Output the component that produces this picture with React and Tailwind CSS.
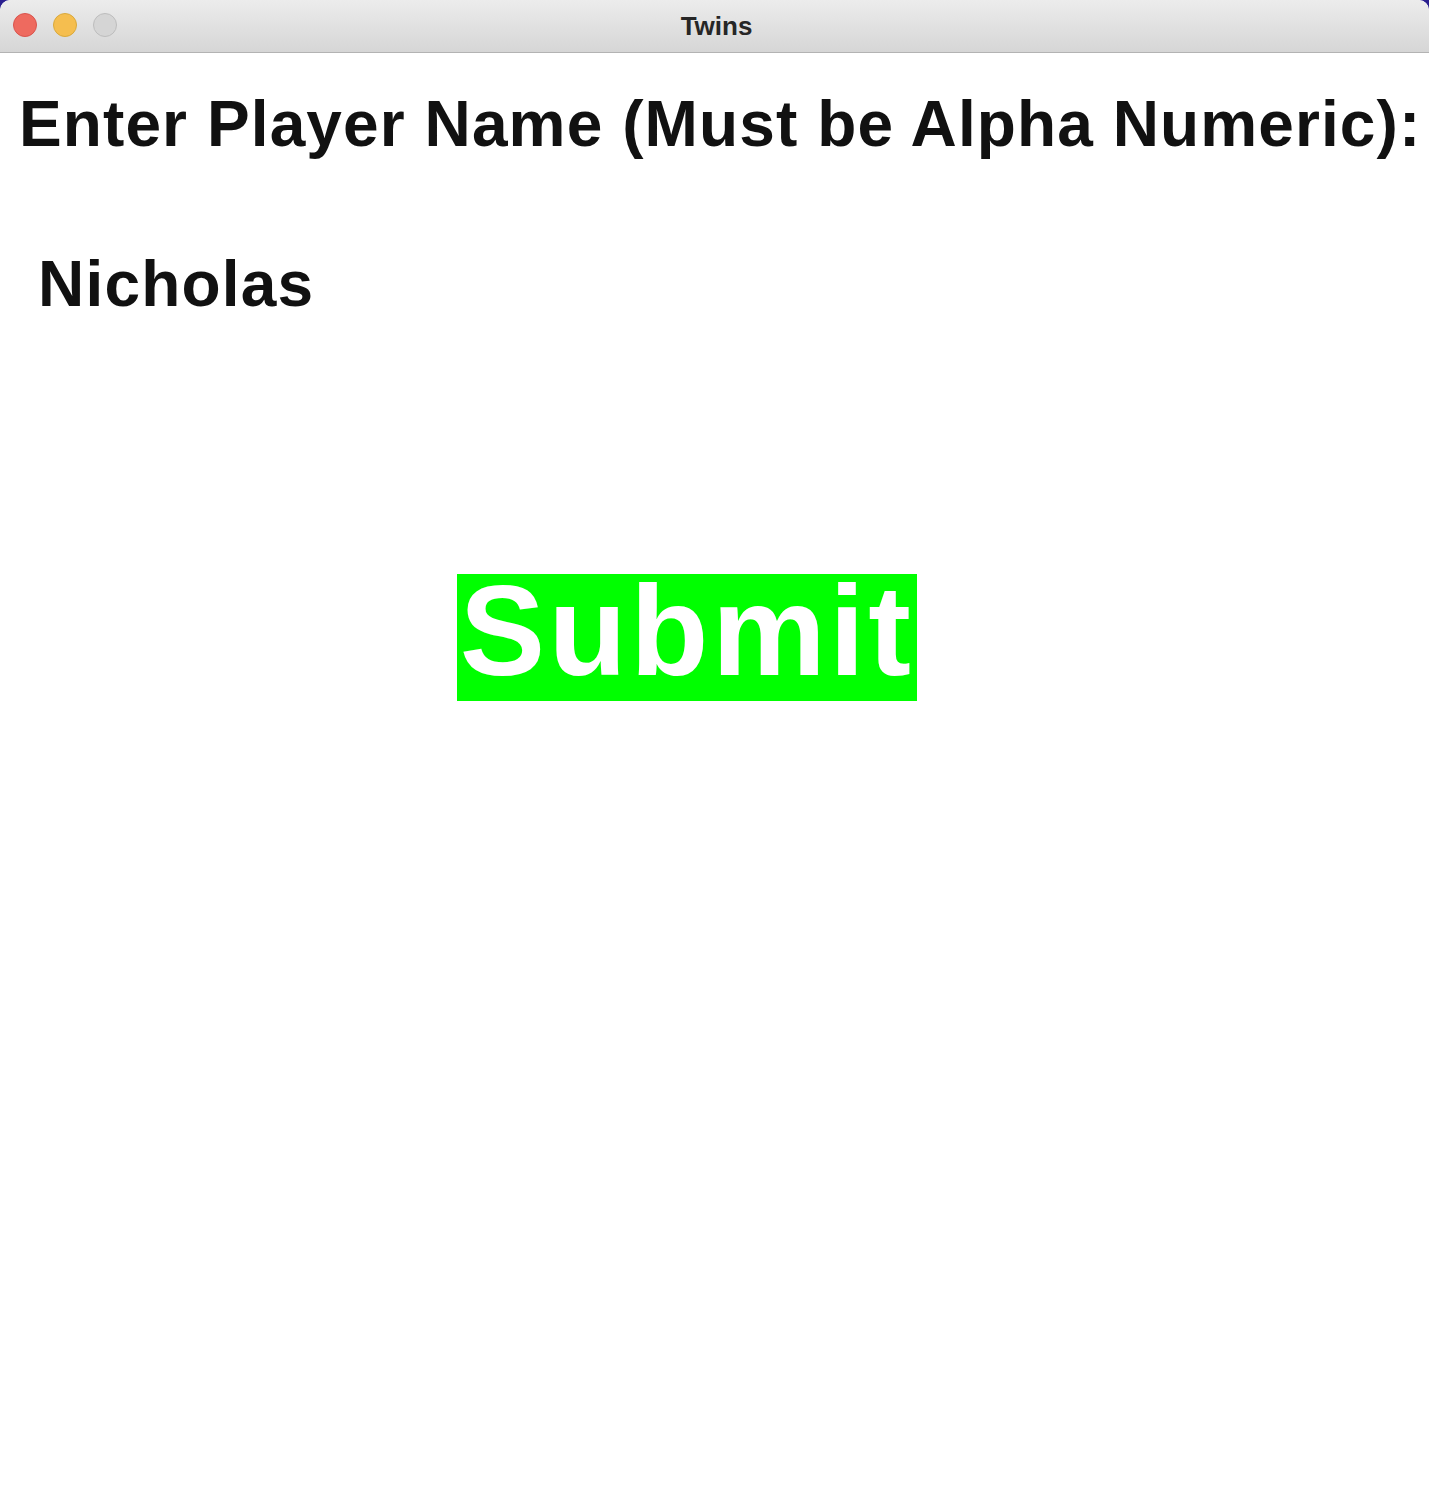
import { useState } from 'react';

// Barra de título estilo macOS
const TitleBar = ({ title }) => (
  <div className="relative flex h-[53px] items-center justify-center border-b border-[#b3b3b3] bg-gradient-to-b from-[#ececec] to-[#d6d6d6] rounded-t-[10px]">
    <div className="absolute left-[13px] top-[13px] flex gap-4">
      <span className="h-6 w-6 rounded-full border border-[#d9544d] bg-[#ee6a5f]" />
      <span className="h-6 w-6 rounded-full border border-[#d9a93c] bg-[#f5be4f]" />
      <span className="h-6 w-6 rounded-full border border-[#bdbdbd] bg-[#d5d5d5]" />
    </div>
    <span className="ml-[4px] text-[26px] font-bold leading-none text-[#262626]">{title}</span>
  </div>
);

const App = () => {
  const [name, setName] = useState('Nicholas');

  return (
    <div className="h-[1488px] w-[1429px] bg-[#2a1f8f]" style={{ fontFamily: '"Liberation Sans", Arial, sans-serif' }}>
      <div className="flex h-full flex-col overflow-hidden rounded-t-[10px] bg-white">
        <TitleBar title="Twins" />

        <h1 className="ml-[19px] mt-[39px] whitespace-nowrap text-[64px] font-bold leading-[64px] tracking-[1.1px] text-[#111]">
          Enter Player Name (Must be Alpha Numeric):
        </h1>

        <input
          className="ml-[38px] mt-[96px] h-[64px] w-[600px] bg-transparent text-[64px] font-bold leading-[64px] tracking-[1.2px] text-[#111] outline-none"
          value={name}
          onChange={(e) => setName(e.target.value)}
        />

        <div className="mt-[258px] flex">
          <button className="ml-[457px] block w-[460px] bg-[#00ff00] pb-[14px] text-center text-[128px] font-bold leading-[113px] tracking-[3.5px] text-white">
            Submit
          </button>
        </div>
      </div>
    </div>
  );
};

export default App;
